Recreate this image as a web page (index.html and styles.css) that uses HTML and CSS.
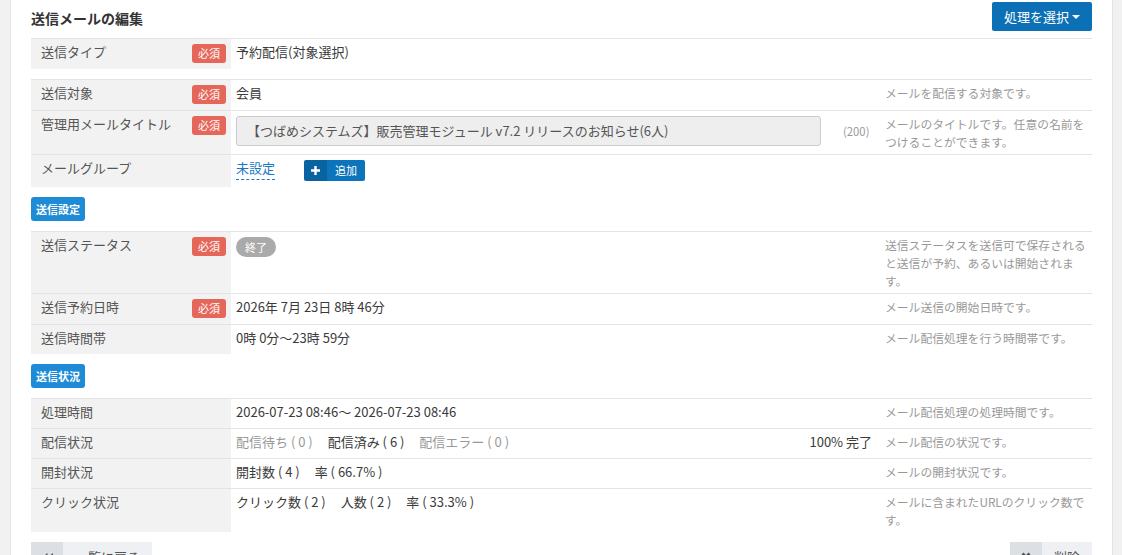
FILE: index.html
```html
<!DOCTYPE html>
<html lang="ja">
<head>
    <meta charset="UTF-8">
    <meta name="viewport" content="width=device-width, initial-scale=1.0">
    <title>送信メールの編集</title>
    <link rel="stylesheet" href="styles.css">
</head>
<body>

    <div id="page">
        <div id="panel">

            <div class="panel-header">
                <h1 class="panel-title">送信メールの編集</h1>
                <button class="btn-action">処理を選択<span class="caret"></span></button>
            </div>

            <table class="form-table">
                <colgroup><col class="col-label"><col><col class="col-desc"></colgroup>
                <tr>
                    <td class="label">送信タイプ<span class="required">必須</span></td>
                    <td class="value">予約配信(対象選択)</td>
                    <td class="desc"></td>
                </tr>
            </table>

            <table class="form-table">
                <colgroup><col class="col-label"><col><col class="col-desc"></colgroup>
                <tr>
                    <td class="label">送信対象<span class="required">必須</span></td>
                    <td class="value">会員</td>
                    <td class="desc">メールを配信する対象です。</td>
                </tr>
                <tr>
                    <td class="label">管理用メールタイトル<span class="required">必須</span></td>
                    <td class="value">
                        <div class="input-row">
                            <div class="text-input">【つばめシステムズ】販売管理モジュール v7.2 リリースのお知らせ(6人)</div>
                            <span class="counter">(200)</span>
                        </div>
                    </td>
                    <td class="desc">メールのタイトルです。任意の名前をつけることができます。</td>
                </tr>
                <tr>
                    <td class="label">メールグループ</td>
                    <td class="value">
                        <a class="dashed-link">未設定</a>
                        <button class="btn-add"><span class="btn-add-icon">
                            <svg width="9" height="9" viewBox="0 0 9 9"><path d="M3.3 0h2.4v3.3H9v2.4H5.7V9H3.3V5.7H0V3.3h3.3z" fill="#fff"/></svg>
                        </span><span class="btn-add-text">追加</span></button>
                    </td>
                    <td class="desc"></td>
                </tr>
            </table>

            <div class="section-tag">送信設定</div>

            <table class="form-table">
                <colgroup><col class="col-label"><col><col class="col-desc"></colgroup>
                <tr>
                    <td class="label">送信ステータス<span class="required">必須</span></td>
                    <td class="value"><span class="status-pill">終了</span></td>
                    <td class="desc">送信ステータスを送信可で保存されると送信が予約、あるいは開始されます。</td>
                </tr>
                <tr>
                    <td class="label">送信予約日時<span class="required">必須</span></td>
                    <td class="value">2026年 7月 23日 8時 46分</td>
                    <td class="desc">メール送信の開始日時です。</td>
                </tr>
                <tr>
                    <td class="label">送信時間帯</td>
                    <td class="value">0時 0分～23時 59分</td>
                    <td class="desc">メール配信処理を行う時間帯です。</td>
                </tr>
            </table>

            <div class="section-tag">送信状況</div>

            <table class="form-table">
                <colgroup><col class="col-label"><col><col class="col-desc"></colgroup>
                <tr>
                    <td class="label">処理時間</td>
                    <td class="value">2026-07-23 08:46～ 2026-07-23 08:46</td>
                    <td class="desc">メール配信処理の処理時間です。</td>
                </tr>
                <tr>
                    <td class="label">配信状況</td>
                    <td class="value">
                        <div class="stat-row">
                            <div>
                                <span class="stat muted">配信待ち ( 0 )</span>
                                <span class="stat">配信済み ( 6 )</span>
                                <span class="stat muted">配信エラー ( 0 )</span>
                            </div>
                            <span class="progress">100% 完了</span>
                        </div>
                    </td>
                    <td class="desc">メール配信の状況です。</td>
                </tr>
                <tr>
                    <td class="label">開封状況</td>
                    <td class="value">
                        <span class="stat">開封数 ( 4 )</span>
                        <span class="stat">率 ( 66.7% )</span>
                    </td>
                    <td class="desc">メールの開封状況です。</td>
                </tr>
                <tr>
                    <td class="label">クリック状況</td>
                    <td class="value">
                        <span class="stat">クリック数 ( 2 )</span>
                        <span class="stat">人数 ( 2 )</span>
                        <span class="stat">率 ( 33.3% )</span>
                    </td>
                    <td class="desc">メールに含まれたURLのクリック数です。</td>
                </tr>
            </table>

            <div class="footer-buttons">
                <button class="btn-light"><span class="btn-light-icon">
                    <svg width="11" height="9" viewBox="0 0 11 9"><path d="M5.5 0v9L0 4.5zM11 0v9L5.5 4.5z" fill="#555"/></svg>
                </span><span class="btn-light-text">一覧に戻る</span></button>
                <button class="btn-light"><span class="btn-light-icon">
                    <svg width="10" height="10" viewBox="0 0 10 10"><path d="M1.5 1.5l7 7M8.5 1.5l-7 7" stroke="#555" stroke-width="2.6"/></svg>
                </span><span class="btn-light-text">削除</span></button>
            </div>

        </div>
    </div>

</body>
</html>
```

FILE: styles.css
```css
body {
    font-family: "Noto Sans CJK JP", "Noto Sans", sans-serif;
    font-size: 13px;
    color: #3a3a3a;
    background-color: #f1f1f1;
    margin: 0;
    padding: 0;
}
#page {
    padding: 0 9px 0 10px;
}
#panel {
    background-color: #fff;
    padding: 0 20px 20px 20px;
    border-left: 1px solid #e4e4e4;
    border-right: 1px solid #e4e4e4;
}
.panel-header {
    display: flex;
    justify-content: space-between;
    align-items: flex-start;
    height: 38px;
}
.panel-title {
    font-size: 14px;
    font-weight: bold;
    line-height: 36px;
    margin: 0;
    color: #333;
}
.btn-action {
    font-family: inherit;
    font-size: 13px;
    color: #fff;
    background-color: #0b70b6;
    border: none;
    border-radius: 2px;
    height: 29px;
    width: 100px;
    margin-top: 2px;
    padding: 0;
    display: flex;
    align-items: center;
    justify-content: center;
}
.caret {
    display: inline-block;
    width: 0;
    height: 0;
    margin-left: 3px;
    border-left: 4px solid transparent;
    border-right: 4px solid transparent;
    border-top: 4px solid #fff;
}

/* form tables */
.form-table {
    width: 100%;
    border-collapse: collapse;
    table-layout: fixed;
    margin-bottom: 10px;
}
.col-label {
    width: 200px;
}
.col-desc {
    width: 215px;
}
.form-table td {
    border-top: 1px solid #e4e4e4;
    vertical-align: top;
    padding: 3px 5px 6px 5px;
    line-height: 20px;
}
.form-table td.label {
    background-color: #f2f2f2;
    color: #555;
    padding-left: 10px;
}
.form-table td.desc {
    color: #999;
    font-size: 11.8px;
    line-height: 18px;
    padding: 4px 2px 3px 8px;
}
.required {
    float: right;
    background-color: #e5675a;
    color: #fff;
    font-size: 11px;
    line-height: 19px;
    padding: 0 6px;
    border-radius: 3px;
    margin-top: 2px;
}
.input-row {
    display: flex;
    align-items: center;
    margin-top: 2px;
}
.text-input {
    width: 585px;
    height: 30px;
    box-sizing: border-box;
    background-color: #eee;
    border: 1px solid #ccc;
    border-radius: 3px;
    color: #555;
    line-height: 28px;
    padding-left: 10px;
    white-space: nowrap;
    overflow: hidden;
}
.counter {
    color: #999;
    font-size: 11.3px;
    margin-left: 22px;
}
.dashed-link {
    color: #1a78c2;
    border-bottom: 1px dashed #1a78c2;
    padding-bottom: 2px;
}
.btn-add {
    display: inline-flex;
    vertical-align: top;
    margin: 2px 0 0 26px;
    padding: 0;
    border: none;
    border-radius: 2px;
    overflow: hidden;
    height: 21px;
    font-family: inherit;
}
.btn-add-icon {
    background-color: #0a63a1;
    width: 23px;
    display: flex;
    align-items: center;
    justify-content: center;
}
.btn-add-text {
    background-color: #0b74bb;
    color: #fff;
    font-size: 11px;
    line-height: 21px;
    padding: 0 8px;
}
.status-pill {
    display: inline-block;
    background-color: #aaa;
    color: #fff;
    font-size: 11px;
    line-height: 20px;
    padding: 0 9px;
    border-radius: 10px;
    margin-top: 2px;
}
.section-tag {
    display: inline-block;
    background-color: #1e8bd6;
    color: #fff;
    font-size: 11px;
    font-weight: bold;
    line-height: 24px;
    padding: 0 5px;
    border-radius: 3px;
    margin: 0 0 10px 0;
}
.stat-row {
    display: flex;
    justify-content: space-between;
}
.stat {
    margin-right: 12px;
}
.stat.muted {
    color: #999;
}

/* footer */
.footer-buttons {
    display: flex;
    justify-content: space-between;
}
.btn-light {
    display: inline-flex;
    padding: 0;
    border: none;
    height: 30px;
    font-family: inherit;
    font-size: 13px;
    color: #555;
    background: none;
}
.btn-light-icon {
    background-color: #dcdfe4;
    width: 32px;
    display: flex;
    align-items: center;
    justify-content: center;
}
.btn-light-text {
    background-color: #eef0f4;
    line-height: 30px;
    padding: 0 12px;
}
```
